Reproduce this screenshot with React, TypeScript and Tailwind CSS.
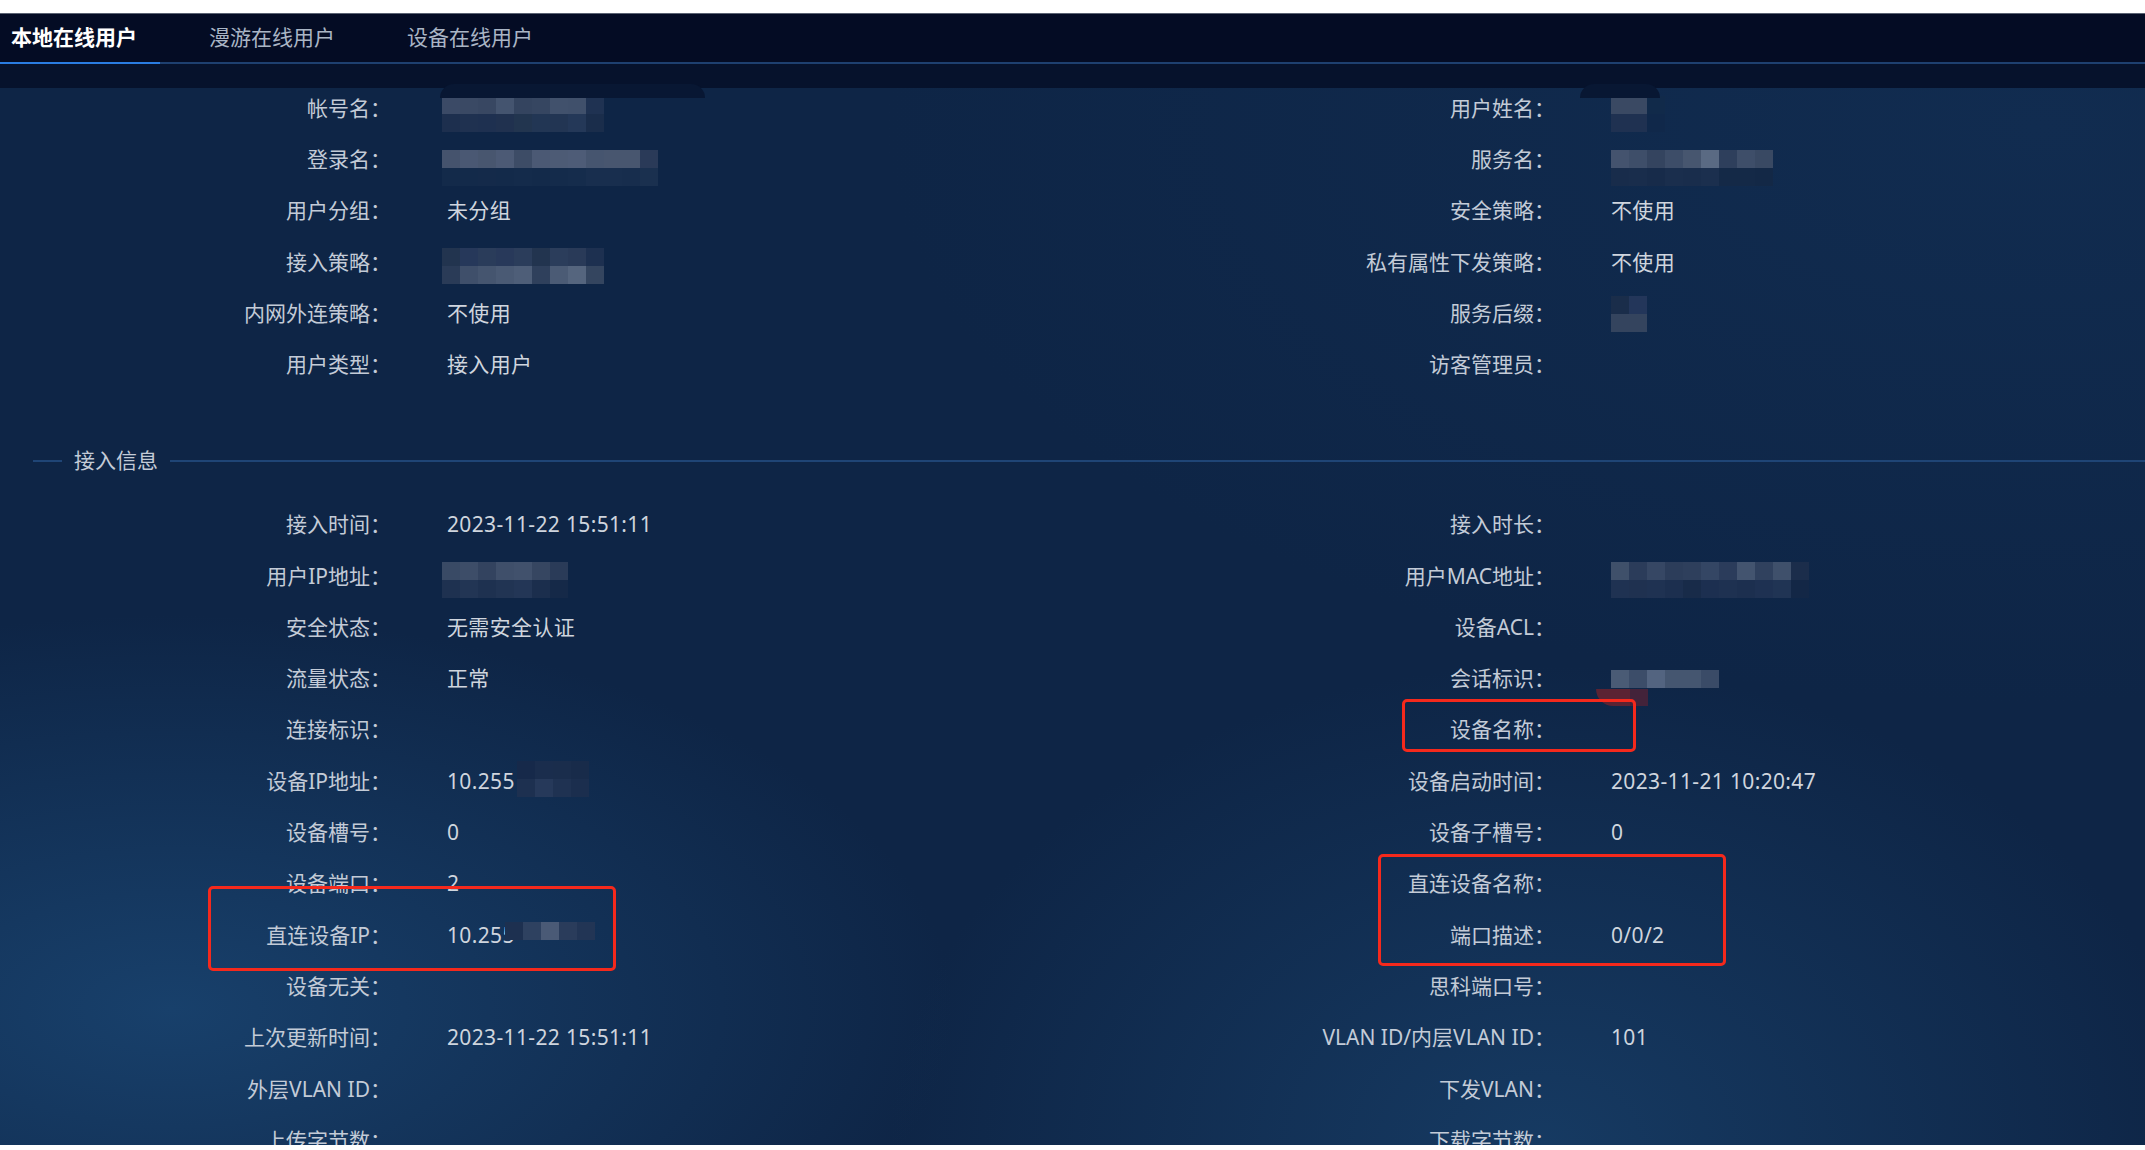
import React from "react";

type Cell = string;

/* redacted values are pixelated blocks in the picture */
function Mosaic({ rows, className = "" }: { rows: Cell[][]; className?: string }) {
  return (
    <div className={"flex flex-col shrink-0 " + className}>
      {rows.map((r, i) => (
        <div key={i} className="flex">
          {r.map((c, j) => (
            <div key={j} className={"h-[18px] w-[18px] " + c} />
          ))}
        </div>
      ))}
    </div>
  );
}

const M = {
  account: [
    ["bg-[#3b4a66]", "bg-[#3a4964]", "bg-[#384762]", "bg-[#44546f]", "bg-[#34445f]", "bg-[#364661]", "bg-[#41516c]", "bg-[#40506b]", "bg-[#1f3252]"],
    ["bg-[#1d2f4e]", "bg-[#1f3150]", "bg-[#1e3050]", "bg-[#20314f]", "bg-[#22354f]", "bg-[#223654]", "bg-[#223553]", "bg-[#243858]", "bg-[#1a2d4b]"],
  ],
  login: [
    ["bg-[#45536d]", "bg-[#4a5873]", "bg-[#48566f]", "bg-[#4c5a75]", "bg-[#3d4c66]", "bg-[#4b5974]", "bg-[#4d5b75]", "bg-[#4e5c77]", "bg-[#46556f]", "bg-[#48566f]", "bg-[#48566f]", "bg-[#2a3a58]"],
    ["bg-[#132a4a]", "bg-[#132a4a]", "bg-[#142a4a]", "bg-[#132a4a]", "bg-[#142b4b]", "bg-[#132a4a]", "bg-[#142b4b]", "bg-[#152c4c]", "bg-[#182e4e]", "bg-[#182e4e]", "bg-[#172d4d]", "bg-[#1a304f]"],
  ],
  policy: [
    ["bg-[#22344f]", "bg-[#26385a]", "bg-[#2a3c5a]", "bg-[#28395a]", "bg-[#2b3d5b]", "bg-[#22344f]", "bg-[#2b3d5b]", "bg-[#293a58]", "bg-[#1d3050]"],
    ["bg-[#2a3b57]", "bg-[#3f4f6a]", "bg-[#45556f]", "bg-[#4a5a74]", "bg-[#4e5e78]", "bg-[#2f405c]", "bg-[#4b5b75]", "bg-[#55657e]", "bg-[#34455f]"],
  ],
  name: [
    ["bg-[#3a4963]", "bg-[#3a4963]", "bg-[#112a4a]"],
    ["bg-[#1f3151]", "bg-[#1f3151]", "bg-[#10284a]"],
  ],
  service: [
    ["bg-[#44536e]", "bg-[#3e4e69]", "bg-[#34445f]", "bg-[#3d4d68]", "bg-[#47566f]", "bg-[#5a6a83]", "bg-[#2e3f5c]", "bg-[#3e4e69]", "bg-[#394963]"],
    ["bg-[#182c4b]", "bg-[#192d4c]", "bg-[#172b4a]", "bg-[#1a2e4d]", "bg-[#192d4c]", "bg-[#1b2f4e]", "bg-[#142947]", "bg-[#142947]", "bg-[#132846]"],
  ],
  suffix: [
    ["bg-[#1a2d4a]", "bg-[#23365a]"],
    ["bg-[#34445e]", "bg-[#34445e]"],
  ],
  ip: [
    ["bg-[#394a65]", "bg-[#3d4d68]", "bg-[#33435f]", "bg-[#3f4f6a]", "bg-[#41516c]", "bg-[#364661]", "bg-[#2a3b58]"],
    ["bg-[#1e3150]", "bg-[#223554]", "bg-[#1e3150]", "bg-[#213453]", "bg-[#233656]", "bg-[#1b2e4d]", "bg-[#152948]"],
  ],
  mac: [
    ["bg-[#3f506a]", "bg-[#2b3c5a]", "bg-[#364764]", "bg-[#2c3d5a]", "bg-[#2e3f5c]", "bg-[#344664]", "bg-[#2b3c5b]", "bg-[#43546f]", "bg-[#30415e]", "bg-[#3f506b]", "bg-[#1b2d4b]"],
    ["bg-[#1f3252]", "bg-[#1f3150]", "bg-[#1f3252]", "bg-[#1c2f4f]", "bg-[#182b49]", "bg-[#1c2f50]", "bg-[#1e3151]", "bg-[#1c2f4f]", "bg-[#1e3152]", "bg-[#203454]", "bg-[#132746]"],
  ],
  session: [
    ["bg-[#4a5b75]", "bg-[#3c4d69]", "bg-[#536480]", "bg-[#455670]", "bg-[#455670]", "bg-[#3a4b67]"],
  ],
  devip: [
    ["bg-[#16294a]", "bg-[#1a2d4d]", "bg-[#1a2d4c]", "bg-[#182b4a]"],
    ["bg-[#1d3050]", "bg-[#26395a]", "bg-[#1f3252]", "bg-[#1b2e4e]"],
  ],
  directip: [
    ["bg-[#1d3050]", "bg-[#2e4160]", "bg-[#4a5a76]", "bg-[#2a3c5b]", "bg-[#223555]"],
  ],
};

type Row = { label: string; value?: React.ReactNode };

function Field({ label, value }: Row) {
  return (
    <div className="flex h-[41px] items-center">
      <div className="w-[391px] shrink-0 text-right text-[#c3cbd7]">{label}：</div>
      <div className="flex items-center pl-[56px] tracking-[0.35px] text-[#cfd5de]">{value}</div>
    </div>
  );
}

function Block({ left, right }: { left: Row[]; right: Row[] }) {
  return (
    <div className="grid grid-cols-[1164px_1fr]">
      <div className="flex flex-col gap-y-[10.3px]">
        {left.map((r) => (
          <Field key={r.label} {...r} />
        ))}
      </div>
      <div className="flex flex-col gap-y-[10.3px]">
        {right.map((r) => (
          <Field key={r.label} {...r} />
        ))}
      </div>
    </div>
  );
}

const userLeft: Row[] = [
  { label: "帐号名", value: <Mosaic rows={M.account} className="translate-y-[5px] -translate-x-[5px]" /> },
  { label: "登录名", value: <Mosaic rows={M.login} className="translate-y-[8px] -translate-x-[5px]" /> },
  { label: "用户分组", value: "未分组" },
  { label: "接入策略", value: <Mosaic rows={M.policy} className="translate-y-[4px] -translate-x-[5px]" /> },
  { label: "内网外连策略", value: "不使用" },
  { label: "用户类型", value: "接入用户" },
];

const userRight: Row[] = [
  { label: "用户姓名", value: <Mosaic rows={M.name} className="translate-y-[5px]" /> },
  { label: "服务名", value: <Mosaic rows={M.service} className="translate-y-[8px]" /> },
  { label: "安全策略", value: "不使用" },
  { label: "私有属性下发策略", value: "不使用" },
  { label: "服务后缀", value: <Mosaic rows={M.suffix} /> },
  { label: "访客管理员" },
];

const accessLeft: Row[] = [
  { label: "接入时间", value: "2023-11-22 15:51:11" },
  { label: "用户IP地址", value: <Mosaic rows={M.ip} className="translate-y-[4px] -translate-x-[5px]" /> },
  { label: "安全状态", value: "无需安全认证" },
  { label: "流量状态", value: "正常" },
  { label: "连接标识" },
  {
    label: "设备IP地址",
    value: (
      <>
        <span>10.255</span>
        <Mosaic rows={M.devip} className="ml-[2px] -translate-y-[2px]" />
      </>
    ),
  },
  { label: "设备槽号", value: "0" },
  { label: "设备端口", value: "2" },
  {
    label: "直连设备IP",
    value: (
      <>
        <span>10.255</span>
        <Mosaic rows={M.directip} className="-ml-[10px] -translate-y-[4px]" />
      </>
    ),
  },
  { label: "设备无关" },
  { label: "上次更新时间", value: "2023-11-22 15:51:11" },
  { label: "外层VLAN ID" },
  { label: "上传字节数" },
];

const accessRight: Row[] = [
  { label: "接入时长" },
  { label: "用户MAC地址", value: <Mosaic rows={M.mac} className="translate-y-[4px]" /> },
  { label: "设备ACL" },
  { label: "会话标识", value: <Mosaic rows={M.session} /> },
  { label: "设备名称" },
  { label: "设备启动时间", value: "2023-11-21 10:20:47" },
  { label: "设备子槽号", value: "0" },
  { label: "直连设备名称" },
  { label: "端口描述", value: "0/0/2" },
  { label: "思科端口号" },
  { label: "VLAN ID/内层VLAN ID", value: "101" },
  { label: "下发VLAN" },
  { label: "下载字节数" },
];

const tabs = ["本地在线用户", "漫游在线用户", "设备在线用户"];

export default function App() {
  return (
    <div className="relative h-[1150px] w-full overflow-hidden bg-white font-['Noto_Sans','Noto_Sans_CJK_SC',sans-serif] text-[21px]">
      <div className="mt-[13px] flex h-[1132px] flex-col overflow-hidden border-t border-[#5a6272] bg-[#0e2546] bg-[radial-gradient(ellipse_at_8%_88%,#18406b_0%,transparent_28%),radial-gradient(ellipse_at_72%_100%,#163a62_0%,transparent_30%),radial-gradient(ellipse_at_95%_10%,#112c50_0%,transparent_40%)]">
        {/* tabs */}
        <div className="flex h-[48px] shrink-0 items-center bg-[#040c24]">
          {tabs.map((t, i) => (
            <div
              key={t}
              className={
                "w-[198px] pl-[11px] " +
                (i === 0 ? "font-bold text-white" : "text-[#aab5c5]")
              }
            >
              {t}
            </div>
          ))}
        </div>
        <div className="h-[2px] shrink-0 bg-[#1e4070]">
          <div className="h-[2px] w-[160px] bg-[#2a7de2]" />
        </div>
        <div className="h-[24px] shrink-0 bg-[#06122c]" />

        <Block left={userLeft} right={userRight} />

        {/* 接入信息 */}
        <div className="mt-[55.5px] flex h-[40px] shrink-0 items-center">
          <div className="ml-[33px] h-[2px] w-[29px] bg-[#1f4576]" />
          <div className="px-[12px] text-[#c3cbd7]">接入信息</div>
          <div className="h-[2px] flex-1 bg-[#1f4576]" />
        </div>

        <div className="mt-[23.5px]">
          <Block left={accessLeft} right={accessRight} />
        </div>
      </div>

      {/* smudges left by the redaction */}
      <div className="absolute left-[440px] top-[84px] h-[14px] w-[265px] rounded-t-[40px] bg-[#081733]" />
      <div className="absolute left-[1580px] top-[84px] h-[14px] w-[80px] rounded-t-[30px] bg-[#081733]" />
      <div className="absolute left-[1596px] top-[689px] h-[17px] w-[36px] rounded-bl-[18px] bg-[#5b2333]" />
      <div className="absolute left-[1630px] top-[689px] h-[17px] w-[18px] bg-[#43233a]" />

      {/* red annotation boxes */}
      <div className="absolute left-[1402px] top-[699px] h-[53px] w-[234px] rounded-[5px] border-[3.5px] border-[#f5291c]" />
      <div className="absolute left-[1378px] top-[854px] h-[112px] w-[348px] rounded-[5px] border-[3.5px] border-[#f5291c]" />
      <div className="absolute left-[208px] top-[886px] h-[85px] w-[408px] rounded-[5px] border-[3.5px] border-[#f5291c]" />
    </div>
  );
}
